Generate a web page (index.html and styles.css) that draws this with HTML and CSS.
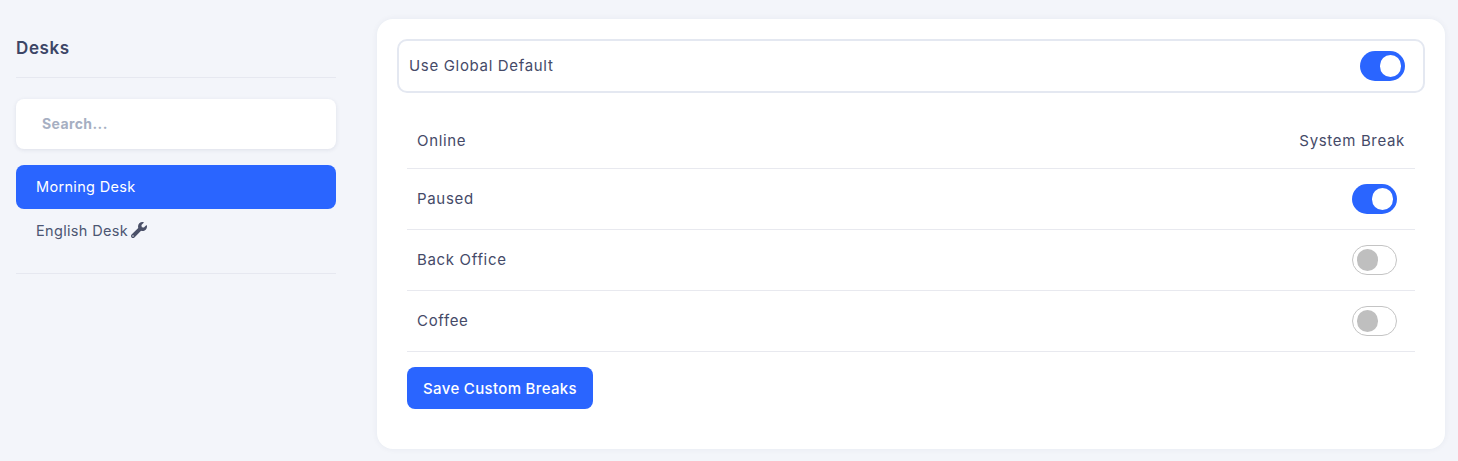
FILE: index.html
```html
<!DOCTYPE html>
<html lang="en">
<head>
<meta charset="utf-8">
<title>Desks</title>
<link rel="stylesheet" href="styles.css">
</head>
<body>
<div class="page">
  <aside class="sidebar">
    <h2 class="side-title">Desks</h2>
    <div class="search"><span class="search-text">Search...</span></div>
    <ul class="desk-list">
      <li class="desk desk-active"><span class="desk-name">Morning Desk</span></li>
      <li class="desk"><span class="desk-name">English Desk</span>
        <svg class="wrench" viewBox="0 0 512 512" aria-hidden="true"><path d="M507.73 109.1c-2.24-9.03-13.54-12.09-20.12-5.51l-74.36 74.36-67.88-11.31-11.31-67.88 74.36-74.36c6.62-6.62 3.43-17.9-5.66-20.16-47.38-11.74-99.55.91-136.58 37.93-39.64 39.64-50.55 97.1-34.05 147.2L18.74 402.76c-24.99 24.99-24.99 65.51 0 90.5 24.99 24.99 65.51 24.99 90.5 0l213.21-213.21c50.12 16.71 107.47 5.68 147.37-34.22 37.07-37.07 49.7-89.32 37.91-136.73zM64 472c-13.25 0-24-10.75-24-24 0-13.26 10.75-24 24-24s24 10.74 24 24c0 13.25-10.75 24-24 24z"/></svg>
      </li>
    </ul>
  </aside>
  <main class="card">
    <div class="global">
      <span class="label">Use Global Default</span>
      <span class="toggle toggle-on"><span class="knob"></span></span>
    </div>
    <div class="rows">
      <div class="row row-head"><span class="label">Online</span><span class="label">System Break</span></div>
      <div class="row row-toggle"><span class="label">Paused</span><span class="toggle toggle-on"><span class="knob"></span></span></div>
      <div class="row row-toggle"><span class="label">Back Office</span><span class="toggle toggle-off"><span class="knob"></span></span></div>
      <div class="row row-toggle"><span class="label">Coffee</span><span class="toggle toggle-off"><span class="knob"></span></span></div>
    </div>
    <button class="save" type="button">Save Custom Breaks</button>
  </main>
</div>
</body>
</html>
```
FILE: styles.css
```css
* { box-sizing: border-box; }
html, body { margin: 0; height: 100%; }
body {
  background: #f3f5fa;
  font-family: Inter, "Liberation Sans", sans-serif;
  font-size: 15px;
  color: #454a68;
  overflow: hidden;
}
.page {
  display: flex;
  align-items: flex-start;
  gap: 41px;
  padding: 19px 13px 0 16px;
}
.sidebar { width: 320px; flex: none; }
.side-title {
  margin: 0 0 21px;
  height: 59px;
  padding-top: 18px;
  line-height: 22px;
  font-size: 17px;
  font-weight: 600;
  letter-spacing: 0.6px;
  color: #3c4566;
  border-bottom: 1px solid #e6e8f0;
}
.search {
  height: 50px;
  margin: 0 0 16px;
  padding: 0 26px;
  display: flex;
  align-items: center;
  background: #fff;
  border-radius: 8px;
  box-shadow: 0 1px 4px rgba(40, 50, 90, 0.1);
}
.search-text {
  padding-bottom: 2px;
  font-size: 14px;
  font-weight: 700;
  letter-spacing: 0.4px;
  color: #a6afc2;
}
.desk-list {
  list-style: none;
  margin: 0;
  padding: 0 0 20px;
  border-bottom: 1px solid #e6e8f0;
}
.desk {
  height: 44px;
  padding: 0 20px;
  display: flex;
  align-items: center;
  gap: 3px;
  border-radius: 8px;
  font-size: 14.5px;
  color: #4c5672;
}
.desk-name { padding-bottom: 2px; letter-spacing: 0.33px; }
.desk-active { background: #2a65ff; color: #fff; }
.wrench { width: 16px; height: 16px; margin-bottom: 2px; fill: #4a5068; }
.card {
  flex: 1;
  height: 430px;
  padding: 20px;
  background: #fff;
  border-radius: 16px;
  box-shadow: 0 0 6px rgba(40, 50, 90, 0.06);
}
.global {
  height: 54px;
  padding: 0 18px 0 10px;
  display: flex;
  align-items: center;
  justify-content: space-between;
  border: 2px solid #e4e8f1;
  border-radius: 10px;
}
.label { font-size: 15px; letter-spacing: 0.67px; color: #454a68; }
.global .label, .row-toggle .label { padding-bottom: 2px; }
.rows { margin: 20px 10px 0; }
.row {
  display: flex;
  align-items: center;
  justify-content: space-between;
  padding: 0 10px;
  border-bottom: 1px solid #e8e9ef;
}
.row-head { height: 56px; }
.row-toggle { height: 61px; padding-right: 18px; }
.toggle {
  width: 45px;
  height: 30px;
  padding: 4px;
  display: flex;
  align-items: center;
  border-radius: 15px;
}
.knob { width: 21.5px; height: 21.5px; border-radius: 50%; }
.toggle-on { background: #2a65ff; justify-content: flex-end; }
.toggle-on .knob { background: #fff; }
.toggle-off { padding: 3.5px; background: #fff; border: 1px solid #c4c4c4; }
.toggle-off .knob { background: #bfbfbf; }
.save {
  display: block;
  height: 42px;
  width: 186px;
  margin: 15px 0 0 10px;
  border: 0;
  border-radius: 8px;
  background: #2a65ff;
  color: #fff;
  font-family: inherit;
  font-size: 15px;
  font-weight: 500;
  letter-spacing: 0.33px;
}
```
